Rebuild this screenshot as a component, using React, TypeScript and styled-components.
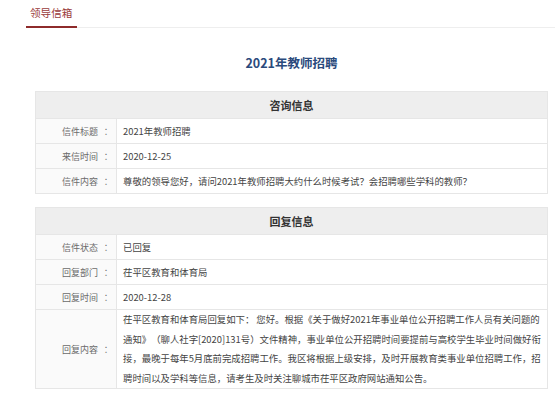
import React from 'react';
import styled, { createGlobalStyle } from 'styled-components';

const GlobalStyle = createGlobalStyle`
	html, body {
		margin: 0;
		padding: 0;
		background: #fff;
		font-family: 'Noto Sans CJK SC', 'Noto Sans', sans-serif;
		color: #333;
		text-spacing-trim: space-all;
	}
`;

const askRows = [
	{ label: '信件标题', value: '2021年教师招聘' },
	{ label: '来信时间', value: '2020-12-25' },
	{ label: '信件内容', value: '尊敬的领导您好，请问2021年教师招聘大约什么时候考试？会招聘哪些学科的教师？' },
];

const replyRows = [
	{ label: '信件状态', value: '已回复' },
	{ label: '回复部门', value: '茌平区教育和体育局' },
	{ label: '回复时间', value: '2020-12-28' },
	{
		label: '回复内容',
		value:
			'茌平区教育和体育局回复如下： 您好。根据《关于做好2021年事业单位公开招聘工作人员有关问题的通知》（聊人社字[2020]131号）文件精神，事业单位公开招聘时间要提前与高校学生毕业时间做好衔接，最晚于每年5月底前完成招聘工作。我区将根据上级安排，及时开展教育类事业单位招聘工作，招聘时间以及学科等信息，请考生及时关注聊城市茌平区政府网站通知公告。',
		long: true,
	},
];

type Row = { label: string; value: string; long?: boolean };

const InfoTable = ({ title, rows }: { title: string; rows: Row[] }) => (
	<Table>
		<tbody>
			<tr>
				<HeadCell colSpan={2}>{title}</HeadCell>
			</tr>
			{rows.map((r) => (
				<tr key={r.label}>
					<LabelCell>
						{r.label}
						<Colon>：</Colon>
					</LabelCell>
					<ValueCell $long={r.long}>{r.value}</ValueCell>
				</tr>
			))}
		</tbody>
	</Table>
);

const App = () => {
	return (
		<Page>
			<GlobalStyle />
			<TabBar>
				<Tab>领导信箱</Tab>
			</TabBar>
			<Content>
				<Title>2021年教师招聘</Title>
				<InfoTable title="咨询信息" rows={askRows} />
				<InfoTable title="回复信息" rows={replyRows} />
			</Content>
		</Page>
	);
};
export default App;

const Page = styled.div`
	width: 555px;
	height: 400px;
	overflow: hidden;
`;

const TabBar = styled.div`
	margin-left: 26px;
	height: 27px;
	border-bottom: 1px solid #eeeeee;
	display: flex;
	align-items: flex-end;
`;

const Tab = styled.div`
	font-size: 10.6px;
	color: #9a3b3b;
	padding: 0 4px;
	width: 51px;
	height: 25px;
	line-height: 20px;
	border-bottom: 2px solid #8e2b2b;
	margin-bottom: -1px;
	box-sizing: border-box;
`;

const Content = styled.div`
	margin: 0 7px 0 35px;
`;

const Title = styled.h2`
	margin: 0;
	padding: 26px 0 0;
	height: 63px;
	box-sizing: border-box;
	text-align: center;
	font-size: 12.5px;
	font-weight: 700;
	color: #2b4a7c;
	line-height: 18px;
`;

const Table = styled.table`
	width: 100%;
	border-collapse: collapse;
	margin-bottom: 13px;
	font-size: 9.4px;
`;

const HeadCell = styled.th`
	background: #eeeeee;
	border: 1px solid #e6e6e6;
	height: 26px;
	padding: 0;
	font-size: 11px;
	font-weight: 700;
	color: #333;
	text-align: center;
`;

const LabelCell = styled.td`
	width: 78px;
	background: #fafafa;
	border: 1px solid #e6e6e6;
	height: 24px;
	padding: 0 2px 0 0;
	text-align: right;
	color: #6a6a6a;
	font-size: 9px;
	white-space: nowrap;
`;

const Colon = styled.span`
	display: inline-block;
	width: 16px;
	text-align: center;
	font-family: 'Noto Sans CJK TC', sans-serif;
`;

const ValueCell = styled.td<{ $long?: boolean }>`
	border: 1px solid #e6e6e6;
	padding: ${(p) => (p.$long ? '0 2px 0 6px' : '0 6px')};
	line-height: ${(p) => (p.$long ? '19.5px' : '14px')};
	color: #444;
	text-align: left;
`;
